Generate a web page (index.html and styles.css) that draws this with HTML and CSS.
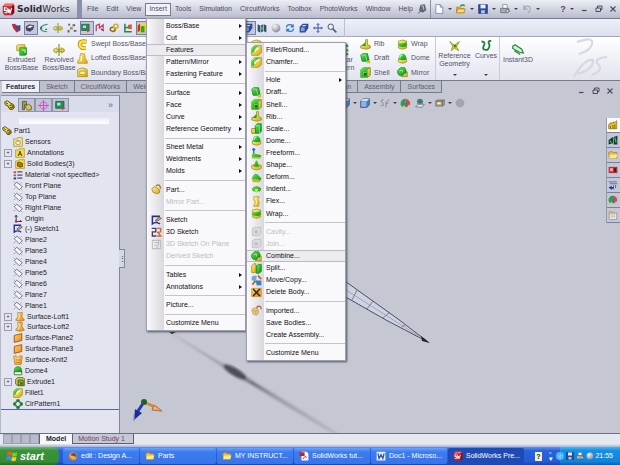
FILE: index.html
```
<!DOCTYPE html>
<html>
<head>
	<meta charset="utf-8">
	<title>SolidWorks</title>
	<link rel="stylesheet" href="styles.css">
</head>
<body>
<!-- icon sprite -->
<svg class="sprite" width="0" height="0">
	<defs>
		<linearGradient id="gy" x1="0" y1="0" x2="1" y2="1"><stop offset="0" stop-color="#fff68a"/><stop offset="1" stop-color="#d9a800"/></linearGradient>
		<linearGradient id="gg" x1="0" y1="0" x2="1" y2="1"><stop offset="0" stop-color="#5cf04a"/><stop offset="1" stop-color="#0c8a1c"/></linearGradient>
		<linearGradient id="go" x1="0" y1="0" x2="1" y2="1"><stop offset="0" stop-color="#ffd070"/><stop offset="1" stop-color="#e88a10"/></linearGradient>
		<radialGradient id="gb" cx=".35" cy=".3" r=".8"><stop offset="0" stop-color="#f4f4f8"/><stop offset="1" stop-color="#7e8090"/></radialGradient>
	</defs>
	<symbol id="sw" viewBox="0 0 16 16"><path d="M1 4L4 1H14L15 3V12L12 15H3L1 12Z" fill="#c8202c"/><path d="M1 4L4 1H14L12 4Z" fill="#ec7070"/><path d="M12 4L15 3V12L12 15Z" fill="#7c0c14"/><path d="M6 6H3V9H6V12H3M7 6L8 12L9 8L10 12L12 6" fill="none" stroke="#fff" stroke-width="1.4"/></symbol>
	<symbol id="fillet" viewBox="0 0 16 16"><path d="M1 5L5 1H15V11L11 15H1Z" fill="url(#gy)" stroke="#8a8a20"/><path d="M1 8Q2 2 8 1H12Q6 3 5 9L1 12Z" fill="url(#gg)"/><path d="M6 10Q6 6 11 5" fill="none" stroke="#fff" stroke-width="2"/></symbol>
	<symbol id="chamfer" viewBox="0 0 16 16"><path d="M1 5L5 1H15V11L11 15H1Z" fill="url(#gy)" stroke="#8a8a20"/><path d="M1 7L7 1H12L5 8V12L1 13Z" fill="url(#gg)"/><path d="M6 10V7L9 5H12" fill="none" stroke="#fff" stroke-width="2"/></symbol>
	<symbol id="draft" viewBox="0 0 16 16"><path d="M1 3L4 1H11L13 10L10 12H3Z" fill="url(#gg)" stroke="#0a7a1a"/><path d="M1 3H8L10 12" fill="none" stroke="#9cff8c"/><path d="M9 15L14 9L15 15Z" fill="#e4b810"/></symbol>
	<symbol id="shell" viewBox="0 0 16 16"><path d="M1 4L5 1H15V12L11 15H1Z" fill="url(#gy)" stroke="#6a7a10"/><path d="M1 4L5 1H15L11 4V15H1Z" fill="url(#gg)"/><path d="M4 7H9V12H4Z" fill="#0a6a14"/><path d="M5 12V8H9" fill="none" stroke="#b0f090"/></symbol>
	<symbol id="rib" viewBox="0 0 16 16"><path d="M1 10L8 7V1H11V8L15 10V13L9 15L1 13Z" fill="url(#gy)" stroke="#90801c"/><path d="M2 10L8 4V10Z" fill="url(#gg)"/></symbol>
	<symbol id="scale" viewBox="0 0 16 16"><path d="M1 8H7V15H1Z" fill="url(#gy)" stroke="#807010"/><path d="M6 4L9 1H15V12L12 15H7Z" fill="url(#gg)" stroke="#0a7a1a"/><path d="M6 4H12V15" fill="none" stroke="#9cff8c"/></symbol>
	<symbol id="dome" viewBox="0 0 16 16"><path d="M2 9V13Q8 17 14 13V9Z" fill="url(#gy)" stroke="#96901c"/><path d="M2 9Q3 1 8 1T14 9Q8 12 2 9Z" fill="url(#gg)"/><path d="M4 7Q5 3 8 3" fill="none" stroke="#caffb8" stroke-width="1.5"/></symbol>
	<symbol id="freeform" viewBox="0 0 16 16"><path d="M1 9Q3 7 6 8T10 9T15 11L13 15H2Z" fill="url(#gg)"/><path d="M1 13H14V15H1Z" fill="#cdb820"/><path d="M4 1V8M2 3L4 1L6 3" fill="none" stroke="#2f63b8" stroke-width="2"/></symbol>
	<symbol id="shape" viewBox="0 0 16 16"><path d="M1 8Q4 8 6 5Q7 2 8 1Q9 2 10 5Q12 8 15 8V12Q8 17 1 12Z" fill="url(#gy)" stroke="#8c9018"/><path d="M2 8Q5 8 6 5T8 1T10 5T14 8Q8 12 2 8Z" fill="url(#gg)"/></symbol>
	<symbol id="deform" viewBox="0 0 16 16"><path d="M1 10Q2 5 6 2Q10 2 12 6L15 9L13 14Q6 15 1 10Z" fill="url(#gg)"/><path d="M1 11L7 10L14 12L12 15H3Z" fill="#ccb62a"/></symbol>
	<symbol id="indent" viewBox="0 0 16 16"><path d="M1 7Q4 3 8 3T15 7L13 11L10 10Q8 14 6 10L3 11Z" fill="url(#gg)"/><path d="M5 8Q8 6 11 8L8 12Z" fill="#f2e04a"/></symbol>
	<symbol id="flex" viewBox="0 0 16 16"><path d="M4 1H12L10 5L12 9L11 15H4L6 9L4 5Z" fill="url(#gy)" stroke="#b39a1c"/><path d="M7 3L8 8L7 13" stroke="#fff" fill="none"/></symbol>
	<symbol id="wrap" viewBox="0 0 16 16"><path d="M2 3Q8 0 14 3V13Q8 17 2 13Z" fill="url(#gy)" stroke="#a09010"/><path d="M2 5Q8 8 14 4V10Q8 13 2 10Z" fill="url(#gg)"/></symbol>
	<symbol id="gray" viewBox="0 0 16 16"><path d="M2 4L5 2H14V11L11 14H2Z" fill="#dcdce0" stroke="#b4b4ba"/><path d="M5 6H10V11H5Z" fill="#c0c0c6"/></symbol>
	<symbol id="combine" viewBox="0 0 16 16"><path d="M8 7H15V14H6V9Z" fill="url(#gy)" stroke="#8c8418"/><path d="M1 5L5 1H11L13 4V9H9V12H3L1 9Z" fill="url(#gg)" stroke="#0a7a1a"/><path d="M4 5H8V8" fill="none" stroke="#b0ff9c"/></symbol>
	<symbol id="split" viewBox="0 0 16 16"><path d="M1 4L4 1H7V14H1Z" fill="url(#gy)" stroke="#908418"/><path d="M8 4L11 2H15V12L12 15H8Z" fill="url(#gg)" stroke="#0a7a1a"/></symbol>
	<symbol id="move" viewBox="0 0 16 16"><path d="M1 3L3 1H8V6L6 8H1Z" fill="#6ca4e8"/><path d="M8 8H15V15H8Z" fill="#3e78d0"/><path d="M2 14L6 9M10 1L15 6" stroke="#e05030" stroke-width="2.5"/><path d="M4 9H8V12" fill="none" stroke="#28a030" stroke-width="2"/></symbol>
	<symbol id="delete" viewBox="0 0 16 16"><path d="M1 2H15V14H1Z" fill="url(#go)" stroke="#c09410"/><path d="M3 3L13 13M13 3L3 13" stroke="#2a2010" stroke-width="2"/></symbol>
	<symbol id="imported" viewBox="0 0 16 16"><path d="M1 7L5 4L10 6L11 11L8 15L3 13Z" fill="#f4c878" stroke="#b48a50"/><path d="M3 8L7 9L9 7M7 9L7 13" stroke="#b48a50" fill="none"/><path d="M8 4Q11 0 14 3L15 6" stroke="#b06a3c" stroke-width="2" fill="none"/></symbol>
	<symbol id="partin" viewBox="0 0 16 16"><path d="M1 7L5 4L9 6L13 9L12 13L8 14L3 12Z" fill="url(#gy)" stroke="#8c7420"/><path d="M7 3Q11 0 13 3L14 7" stroke="#b07a30" stroke-width="2" fill="none"/></symbol>
	<symbol id="part" viewBox="0 0 16 16"><path d="M1 3L5 1L9 4L14 7L15 11L12 14L8 13L6 9L2 7Z" fill="url(#gy)" stroke="#4c4210" stroke-width="1.4"/><path d="M8 8Q11 6 13 9T9 11M3 4L6 6" fill="none" stroke="#3c340c" stroke-width="1.4"/></symbol>
	<symbol id="sketch" viewBox="0 0 16 16"><path d="M13 2H2V13Q7 9 13 13" fill="none" stroke="#20309c" stroke-width="2.2"/><path d="M6 8L12 3L15 5L9 9Z" fill="#e8a060" stroke="#503c28"/></symbol>
	<symbol id="sketch3d" viewBox="0 0 16 16"><path d="M1 2H7V7H2V13H8" fill="none" stroke="#4c3c58" stroke-width="2"/><path d="M9 2H14V7L10 8L14 13H9" fill="none" stroke="#d0682c" stroke-width="2"/></symbol>
	<symbol id="graysketch" viewBox="0 0 16 16"><path d="M2 2H14V14H2ZM5 5H11M5 9H9V14M11 2V9" fill="none" stroke="#bcbcc2" stroke-width="1.5"/></symbol>
	<symbol id="sensor" viewBox="0 0 16 16"><path d="M1 3H6L7 1H15V15H1Z" fill="#f3e47c" stroke="#96843c"/><circle cx="8" cy="9" r="3.5" fill="#fff" stroke="#806a20"/><path d="M8 9V6" stroke="#806a20"/></symbol>
	<symbol id="annot" viewBox="0 0 16 16"><path d="M1 3H6L7 1H15V15H1Z" fill="#f5dc50" stroke="#a08820"/><path d="M5 13L8 5L11 13M6 10H10" fill="none" stroke="#4c3808" stroke-width="1.4"/></symbol>
	<symbol id="bodies" viewBox="0 0 16 16"><path d="M1 3H6L7 1H15V15H1Z" fill="#f5d840" stroke="#a08820"/><path d="M4 6L7 5L12 7V12L8 13L4 11Z" fill="#a87c08" stroke="#3c2c04"/></symbol>
	<symbol id="material" viewBox="0 0 16 16"><path d="M1 2H5V5H1ZM1 7H5V10H1Z" fill="#c84c50"/><path d="M1 12H5V15H1Z" fill="#30348c"/><path d="M7 3H15M7 8H15M7 13H15" stroke="#4a4c70" stroke-width="2"/></symbol>
	<symbol id="plane" viewBox="0 0 16 16"><path d="M6 2L15 9L10 14L2 6Z" fill="#f4f5fa" stroke="#5c6070" stroke-width="1.3"/><path d="M1 1L4 4M12 12L15 15M1 13L4 11M12 4L14 2" stroke="#7c8090"/></symbol>
	<symbol id="origin" viewBox="0 0 16 16"><path d="M5 2V12H14M5 2L3 5M5 2L7 5M14 12L11 10" fill="none" stroke="#2c3058" stroke-width="1.5"/><circle cx="5" cy="12" r="2" fill="#b03040"/></symbol>
	<symbol id="loft" viewBox="0 0 16 16"><path d="M4 1H12L11 7L15 13L8 15L1 13L5 7Z" fill="url(#go)" stroke="#a8701c"/><path d="M6 2L7 8L5 12" fill="none" stroke="#fff0c0" stroke-width="1.5"/></symbol>
	<symbol id="surfplane" viewBox="0 0 16 16"><path d="M2 4L14 1V12L2 15Z" fill="url(#go)" stroke="#9c5810" stroke-width="1.5"/></symbol>
	<symbol id="knit" viewBox="0 0 16 16"><path d="M1 2L5 1L8 4L11 1L15 2L13 15H3Z" fill="url(#go)" stroke="#b07818"/><path d="M8 4V14" stroke="#fff0b0" stroke-width="2"/><path d="M6 8H10M6 12H10" stroke="#6c4008"/></symbol>
	<symbol id="domet" viewBox="0 0 16 16"><path d="M2 9V14H14V9Z" fill="#f4f8e8" stroke="#287a28" stroke-width="1.4"/><path d="M2 9Q2 1 8 1T14 9Z" fill="url(#gg)" stroke="#28701c"/></symbol>
	<symbol id="extrude" viewBox="0 0 16 16"><path d="M1 4L4 1H13L15 3V14H4L1 11Z" fill="#d8c850" stroke="#4c5010" stroke-width="1.2"/><path d="M5 5H13V13H5Z" fill="#90b838" stroke="#2c5c14" stroke-width="1.4"/><path d="M7 7L11 11M11 8V11H8" stroke="#1c3c0c" fill="none"/></symbol>
	<symbol id="pattern" viewBox="0 0 16 16"><path d="M6 1H10V4H6ZM6 12H10V15H6ZM1 6H4V10H1ZM12 6H15V10H12Z" fill="#1c6c28" stroke="#1c6c28"/><path d="M4 4L6 6M10 6L12 4M4 12L6 10M10 10L12 12" stroke="#2c8c38" stroke-width="3"/></symbol>
	<symbol id="linear" viewBox="0 0 16 16"><path d="M1 1H4V4H1ZM7 1H10V4H7ZM12 1H15V4H12ZM1 7H4V10H1ZM7 7H10V10H7ZM12 7H15V10H12ZM1 12H4V15H1ZM7 12H10V15H7ZM12 12H15V15H12Z" fill="#2a9a30"/></symbol>
	<symbol id="extrudeb" viewBox="0 0 16 16"><path d="M1 2L3 1H12V9H1Z" fill="url(#gy)" stroke="#a09020"/><path d="M5 5H14V14L12 15H5Z" fill="url(#gg)" stroke="#2c8c28"/><path d="M8 8H12V12" stroke="#e4f070" stroke-width="1.5" fill="none"/></symbol>
	<symbol id="revolve" viewBox="0 0 16 16"><path d="M1 7L5 5V7H11V5L15 7V10L11 12V10H5V12L1 10Z" fill="url(#gy)" stroke="#98882c"/><path d="M8 0V16" stroke="#5c9c30" stroke-width="1.5"/></symbol>
	<symbol id="sweep" viewBox="0 0 16 16"><path d="M14 4Q4 2 4 8T13 13" fill="none" stroke="#b08a08" stroke-width="6"/><path d="M14 4Q4 2 4 8T13 13" fill="none" stroke="#fae040" stroke-width="4"/></symbol>
	<symbol id="loftb" viewBox="0 0 16 16"><path d="M5 1H11L12 8L15 12V15H1V12L4 8Z" fill="url(#gy)" stroke="#b09010"/><path d="M6 4V12" stroke="#fff" stroke-width="1.5"/></symbol>
	<symbol id="boundary" viewBox="0 0 16 16"><path d="M1 4Q8 -1 15 4V14H1Z" fill="url(#gy)" stroke="#a88408"/><path d="M4 6H12V11H4Z" fill="#fff4a0" stroke="#b88c10"/></symbol>
	<symbol id="refgeo" viewBox="0 0 16 16"><path d="M1 2L7 7L14 2L10 9L13 14L7 11L3 14L5 8Z" fill="#e8d820" stroke="#7c8c18"/><circle cx="8" cy="8" r="2" fill="#30902c"/></symbol>
	<symbol id="curves" viewBox="0 0 16 16"><path d="M2 2Q8 2 5 8T10 13Q14 9 12 5T15 1" fill="none" stroke="#208040" stroke-width="2.4"/></symbol>
	<symbol id="instant" viewBox="0 0 16 16"><path d="M1 3L4 1L13 7L15 12L10 11L1 6ZM3 9L11 14" fill="#d8f0d4" stroke="#2c8440" stroke-width="1.6"/></symbol>
	<symbol id="ball" viewBox="0 0 16 16"><circle cx="8" cy="8" r="7" fill="url(#gb)"/></symbol>
	<symbol id="grayball" viewBox="0 0 16 16"><circle cx="8" cy="8" r="7" fill="#a2a4b0"/></symbol>
	<symbol id="rgb" viewBox="0 0 16 16"><path d="M8 8V1A7 7 0 0 1 14 11Z" fill="#e44834"/><path d="M8 8L14 11A7 7 0 0 1 3 13Z" fill="#f0c828"/><path d="M8 8L3 13A7 7 0 0 1 8 1Z" fill="#28a050"/><circle cx="9" cy="10" r="3" fill="#3c74d8"/></symbol>
	<symbol id="scene" viewBox="0 0 16 16"><circle cx="8" cy="6" r="5" fill="#58a068"/><path d="M4 5L10 8M6 2L12 6" stroke="#3860a0" stroke-width="2"/><path d="M1 14L5 10H15L11 15Z" fill="#e4e4e8" stroke="#50545c"/></symbol>
	<symbol id="boxy" viewBox="0 0 16 16"><path d="M1 5L4 3H15V11L12 13H1Z" fill="#a8a284" stroke="#686858"/><path d="M1 5H12V13M12 5L15 3" stroke="#55553c" fill="none"/><path d="M4 7H9V10H4Z" fill="#f4f4f4"/></symbol>
	<symbol id="cube" viewBox="0 0 16 16"><path d="M1 5L5 1H15V11L11 15H1Z" fill="#4c7cc4" stroke="#28406c"/><path d="M1 5L5 1H15L11 5Z" fill="#cfe2fa"/><path d="M2 6H10V14H2Z" fill="#8cb4ec"/></symbol>
	<symbol id="glasses" viewBox="0 0 16 16"><path d="M6 3Q1 2 2 6Q7 8 5 12Q3 13 1 12M9 15L11 6Q12 3 15 3M8 8H14" fill="none" stroke="#8c8ea0" stroke-width="1.6"/></symbol>
	<symbol id="new" viewBox="0 0 16 16"><path d="M3 1H10L14 5V15H3Z" fill="#fff" stroke="#5c6488"/><path d="M10 1V5H14" fill="#d0d8f0" stroke="#5c6488"/></symbol>
	<symbol id="open" viewBox="0 0 16 16"><path d="M1 5H6L7 7H13V14H1Z" fill="#e8b020" stroke="#a87810"/><path d="M3 8H15L12 14H1Z" fill="#ffe070" stroke="#a87810"/><path d="M7 4Q10 0 14 3" stroke="#2c9438" stroke-width="2.4" fill="none"/></symbol>
	<symbol id="save" viewBox="0 0 16 16"><path d="M1 1H15V15H1Z" fill="#2c4ca0" stroke="#182c68"/><path d="M4 1H12V7H4Z" fill="#e8eefc"/><path d="M5 10H11V15H5Z" fill="#b4c4e8"/></symbol>
	<symbol id="print" viewBox="0 0 16 16"><path d="M4 1H11L12 7H5Z" fill="#fff" stroke="#6c6e80"/><path d="M1 7H14L15 12L12 14H1Z" fill="#a8aab8" stroke="#55586c"/><circle cx="12" cy="11" r="2.4" fill="#d8dae0" stroke="#55586c"/></symbol>
	<symbol id="undo" viewBox="0 0 16 16"><path d="M3 2V8H9M3 8Q6 2 11 4T10 14" fill="none" stroke="#a4a6b4" stroke-width="2"/></symbol>
	<symbol id="pin" viewBox="0 0 16 16"><path d="M6 2L12 1L14 10L9 13L4 10Z" fill="#686c80" stroke="#3c4054"/><path d="M7 3L10 3L11 9" stroke="#fff" fill="none"/><path d="M6 11L2 15" stroke="#3c4054" stroke-width="1.5"/></symbol>
	<symbol id="min" viewBox="0 0 16 16"><path d="M2 11H11" stroke="#484c60" stroke-width="2.5"/></symbol>
	<symbol id="restore" viewBox="0 0 16 16"><path d="M5 6V2H14V9H11M2 6H11V13H2Z" fill="none" stroke="#484c60" stroke-width="2"/></symbol>
	<symbol id="close" viewBox="0 0 16 16"><path d="M3 3L13 13M13 3L3 13" stroke="#484c60" stroke-width="2.2"/></symbol>
	<symbol id="t1" viewBox="0 0 16 16"><path d="M1 2L6 1L14 7L15 12L9 15L4 9Z" fill="#b83040"/><path d="M7 5L15 3V11L9 10Z" fill="#305090"/></symbol>
	<symbol id="t2" viewBox="0 0 16 16"><path d="M1 6L7 2L15 4L13 10L8 14L2 12Z" fill="#46485a"/><path d="M3 7L8 4L13 5L8 8Z" fill="#f4f4f8"/></symbol>
	<symbol id="t3" viewBox="0 0 16 16"><path d="M14 2Q5 3 3 8T13 14" stroke="#30a048" stroke-width="2" fill="none"/><path d="M2 6H5V10H2ZM10 9H13V11H10Z" fill="#2c66b0"/></symbol>
	<symbol id="t5" viewBox="0 0 16 16"><path d="M2 1H5V4H2ZM9 2H13V5H9ZM5 7H9V10H5ZM1 11H4V15H1ZM11 11H15V14H11Z" fill="#5a5c70"/><path d="M4 4L11 12M11 4L3 12" stroke="#d0a030"/></symbol>
	<symbol id="t6" viewBox="0 0 16 16"><path d="M1 2H13V12H1Z" fill="#209058" stroke="#184c3c"/><path d="M3 4H8V8H3Z" fill="#a0ecc0"/><path d="M9 9L15 12L10 15Z" fill="#d04040"/></symbol>
	<symbol id="t7" viewBox="0 0 16 16"><path d="M2 13V4L7 2V8L13 3V12" stroke="#c04058" stroke-width="2" fill="none"/><path d="M9 9L14 13" stroke="#6c2c70" stroke-width="2"/></symbol>
	<symbol id="t8" viewBox="0 0 16 16"><ellipse cx="6" cy="10" rx="4" ry="3.4" fill="none" stroke="#8c7010" stroke-width="2.4"/><ellipse cx="11" cy="5" rx="3.6" ry="3" fill="none" stroke="#d8b020" stroke-width="2.4"/></symbol>
	<symbol id="t9" viewBox="0 0 16 16"><path d="M3 1V14H14M3 7H8" stroke="#2c8440" stroke-width="2.4" fill="none"/><path d="M8 3L14 2V10L8 9Z" fill="#c85c30"/></symbol>
	<symbol id="t10" viewBox="0 0 16 16"><path d="M1 4L5 1H15V12L11 15H1Z" fill="#f0e020"/><path d="M1 4L5 1V12L1 15Z" fill="#d83020"/><path d="M6 5H12V15H6Z" fill="#28a838"/></symbol>
	<symbol id="map" viewBox="0 0 16 16"><path d="M1 2L5 4V15L1 13ZM6 4L10 2V13L6 15ZM11 2L15 4V15L11 13Z" fill="#34506c"/><path d="M7 6L9 5V11L7 12Z" fill="#70c078"/></symbol>
	<symbol id="refresh" viewBox="0 0 16 16"><path d="M2 7Q4 1 10 3L13 6M13 2V6H9M14 9Q12 15 6 13L3 10M3 14V10H7" stroke="#2c7cc0" stroke-width="2" fill="none"/></symbol>
	<symbol id="darkcube" viewBox="0 0 16 16"><path d="M1 6L6 1H15V8L10 15H1Z" fill="#2c4c98"/><path d="M3 7H9V13H3Z" fill="#7ca4e0"/><path d="M4 5L7 3H12L10 5Z" fill="#d0e0fa"/></symbol>
	<symbol id="pan" viewBox="0 0 16 16"><path d="M8 1V15M1 8H15M6 3L8 1L10 3M6 13L8 15L10 13M3 6L1 8L3 10M13 6L15 8L13 10" stroke="#3058a8" stroke-width="1.6" fill="none"/></symbol>
	<symbol id="zoomi" viewBox="0 0 16 16"><circle cx="6" cy="6" r="4.4" fill="#e8f0fc" stroke="#505870" stroke-width="1.6"/><path d="M9 9L15 15" stroke="#505870" stroke-width="2.4"/></symbol>
	<symbol id="config" viewBox="0 0 16 16"><path d="M2 2H8V7H5V14H2Z" fill="#a09a50" stroke="#484420"/><path d="M7 8L11 6L15 9V14L10 15L7 12Z" fill="#d8c850" stroke="#484420"/></symbol>
	<symbol id="target" viewBox="0 0 16 16"><circle cx="8" cy="8" r="5" fill="#e8b0e4" stroke="#c478cc" stroke-width="1.6"/><path d="M8 0V16M0 8H16" stroke="#b060b8" stroke-width="1.6"/></symbol>
	<symbol id="house" viewBox="0 0 16 16"><path d="M1 7L5 4V6L9 3V5L14 1V14H1Z" fill="#e8c030" stroke="#806408"/><path d="M4 9V14M8 8V14M11 7V14" stroke="#806408" stroke-width="1.4"/></symbol>
	<symbol id="lib" viewBox="0 0 16 16"><path d="M1 8L8 3V13L1 15ZM9 3L15 1V15H9Z" fill="#183c2c"/><path d="M3 9L6 13M11 4L13 12" stroke="#50b068" stroke-width="2"/></symbol>
	<symbol id="folder" viewBox="0 0 16 16"><path d="M1 4L6 2L8 4H14V13H2Z" fill="#e8b838" stroke="#a07c18"/><path d="M3 7H15L13 13H2Z" fill="#ffe890"/></symbol>
	<symbol id="photo" viewBox="0 0 16 16"><path d="M1 3H15V13H1Z" fill="#b83038"/><path d="M3 5H8V10H3Z" fill="#f0a0a0"/><path d="M10 5H13V11H10Z" fill="#401820"/></symbol>
	<symbol id="layers" viewBox="0 0 16 16"><path d="M1 3H14M3 6H15M9 8V15M12 8V13" stroke="#60788c" stroke-width="1.6"/><path d="M1 12L6 9V11H9V14H6V16Z" fill="#2038a0"/></symbol>
	<symbol id="prop" viewBox="0 0 16 16"><path d="M2 5H14V15H2Z" fill="#f4f4f0" stroke="#807c70"/><path d="M1 2H9L12 5H1Z" fill="#d8a850"/><path d="M4 8H12M4 11H12" stroke="#908c80"/></symbol>
	<symbol id="firefox" viewBox="0 0 16 16"><circle cx="8" cy="8" r="7" fill="#e87820"/><circle cx="9" cy="7" r="4" fill="#3858a8"/><path d="M2 5Q6 8 9 8T13 13Q4 15 2 5Z" fill="#f8b030"/></symbol>
	<symbol id="pdf" viewBox="0 0 16 16"><path d="M4 1H12L15 4V15H4Z" fill="#fff"/><path d="M1 2H9V8H1Z" fill="#c82028"/><path d="M7 13Q10 5 12 11" fill="none" stroke="#c82028" stroke-width="1.5"/></symbol>
	<symbol id="word" viewBox="0 0 16 16"><path d="M1 1H15V15H1Z" fill="#e8f0fc"/><path d="M3 4L5 12L8 6L11 12L13 4" fill="none" stroke="#2850a8" stroke-width="2"/></symbol>
	<symbol id="flag" viewBox="0 0 16 16"><path d="M2 3Q5 1 8 3L7 8Q4 6 1 8Z" fill="#f05a28"/><path d="M9 3Q12 5 15 3L14 8Q11 10 8 8Z" fill="#80cc28"/><path d="M1 9Q4 7 7 9L6 14Q3 12 0 14Z" fill="#3c8cf0"/><path d="M8 9Q11 11 14 9L13 14Q10 16 7 14Z" fill="#fcd020"/></symbol>
	<symbol id="ds" viewBox="0 0 40 42"><path d="M5 5Q22 -1 20 7Q18 14 7 17M2 40Q12 22 21 23Q22 32 6 37M35 20Q23 21 25 26Q33 33 20 38" fill="none" stroke="#d6d8e2" stroke-width="2.2"/></symbol>
</svg>

<div class="app">
	<div class="title">
		<h1 class="logo"><svg class="i13"><use href="#sw"/></svg><b>Solid</b>Works</h1>
		<div class="nav">
			<button>File</button>
			<button>Edit</button>
			<button>View</button>
			<button class="current">Insert</button>
			<button>Tools</button>
			<button>Simulation</button>
			<button>CircuitWorks</button>
			<button>Toolbox</button>
			<button>PhotoWorks</button>
			<button>Window</button>
			<button>Help</button>
		</div>
		<div class="quick">
			<button class="pin" aria-label="Pin"><svg class="i10"><use href="#pin"/></svg></button>
			<button class="drop" aria-label="New"><svg class="i10"><use href="#new"/></svg></button>
			<button class="drop" aria-label="Open"><svg class="i10"><use href="#open"/></svg></button>
			<button class="drop" aria-label="Save"><svg class="i10"><use href="#save"/></svg></button>
			<button class="drop" aria-label="Print"><svg class="i10"><use href="#print"/></svg></button>
			<button class="drop" aria-label="Undo"><svg class="i10"><use href="#undo"/></svg></button>
		</div>
		<div class="wins">
			<button class="drop help">?</button>
			<button aria-label="Minimize"><svg class="i8"><use href="#min"/></svg></button>
			<button aria-label="Restore"><svg class="i8"><use href="#restore"/></svg></button>
			<button aria-label="Close"><svg class="i8"><use href="#close"/></svg></button>
		</div>
	</div>

	<div class="tools">
		<button aria-label="Extrude"><svg class="i10"><use href="#t1"/></svg></button>
		<button class="on" aria-label="Shaded"><svg class="i10"><use href="#t2"/></svg></button>
		<button aria-label="Curve"><svg class="i10"><use href="#t3"/></svg></button>
		<button aria-label="Revolve"><svg class="i10"><use href="#revolve"/></svg></button>
		<button aria-label="Relations"><svg class="i10"><use href="#t5"/></svg></button>
		<button class="on" aria-label="Display"><svg class="i10"><use href="#t6"/></svg></button>
		<button aria-label="Measure"><svg class="i10"><use href="#t7"/></svg></button>
		<button aria-label="Mate"><svg class="i10"><use href="#t8"/></svg></button>
		<button aria-label="Tree"><svg class="i10"><use href="#t9"/></svg></button>
		<button class="on" aria-label="Colors"><svg class="i10"><use href="#t10"/></svg></button>
		<div class="tools-more">
			<button class="on" aria-label="Section"><svg class="i10"><use href="#darkcube"/></svg></button>
			<button aria-label="Views"><svg class="i10"><use href="#map"/></svg></button>
			<button aria-label="Appearance"><svg class="i10"><use href="#ball"/></svg></button>
			<button aria-label="Rotate"><svg class="i10"><use href="#refresh"/></svg></button>
			<button aria-label="Orientation"><svg class="i10"><use href="#darkcube"/></svg></button>
			<button aria-label="Pan"><svg class="i10"><use href="#pan"/></svg></button>
			<button aria-label="Zoom"><svg class="i10"><use href="#zoomi"/></svg></button>
		</div>
	</div>

	<div class="ribbon">
		<button class="big"><svg class="i12"><use href="#extrudeb"/></svg>Extruded Boss/Base</button>
		<button class="big"><svg class="i12"><use href="#revolve"/></svg>Revolved Boss/Base</button>
		<div class="stack">
			<button><svg class="i11"><use href="#sweep"/></svg>Swept Boss/Base</button>
			<button><svg class="i11"><use href="#loftb"/></svg>Lofted Boss/Base</button>
			<button><svg class="i11"><use href="#boundary"/></svg>Boundary Boss/Base</button>
		</div>
		<button class="peek" aria-label="Fillet"><svg class="i11"><use href="#boundary"/></svg></button>
		<button class="big"><svg class="i12"><use href="#linear"/></svg>Linear Pattern</button>
		<div class="stack">
			<button><svg class="i11"><use href="#rib"/></svg>Rib</button>
			<button><svg class="i11"><use href="#draft"/></svg>Draft</button>
			<button><svg class="i11"><use href="#shell"/></svg>Shell</button>
		</div>
		<div class="stack line">
			<button><svg class="i11"><use href="#wrap"/></svg>Wrap</button>
			<button><svg class="i11"><use href="#dome"/></svg>Dome</button>
			<button><svg class="i11"><use href="#combine"/></svg>Mirror</button>
		</div>
		<button class="big top"><svg class="i12"><use href="#refgeo"/></svg>Reference Geometry<i></i></button>
		<button class="big top line"><svg class="i12"><use href="#curves"/></svg>Curves<i></i></button>
		<button class="big"><svg class="i12"><use href="#instant"/></svg>Instant3D</button>
		<svg class="ds"><use href="#ds"/></svg>
	</div>

	<div class="tabs">
		<button class="current">Features</button>
		<button>Sketch</button>
		<button>CircuitWorks</button>
		<div class="tabs-mid">
			<button>Weldments</button>
			<button>Simulation</button>
		</div>
		<button>Assembly</button>
		<button>Surfaces</button>
	</div>

	<div class="main">
		<div class="side">
			<div class="side-hd">
				<button class="current" aria-label="Feature tree"><svg class="i11"><use href="#part"/></svg></button>
				<button aria-label="Properties"><svg class="i11"><use href="#config"/></svg></button>
				<button aria-label="Configurations"><svg class="i11"><use href="#target"/></svg></button>
				<button aria-label="Display"><svg class="i11"><use href="#t6"/></svg></button>
				<button class="more">»</button>
			</div>
			<input class="filter" type="text" aria-label="Filter">
			<ul class="tree">
				<li class="root"><svg class="i10"><use href="#part"/></svg>Part1</li>
				<li><svg class="i10"><use href="#sensor"/></svg>Sensors</li>
				<li class="plus"><svg class="i10"><use href="#annot"/></svg>Annotations</li>
				<li class="plus"><svg class="i10"><use href="#bodies"/></svg>Solid Bodies(3)</li>
				<li><svg class="i10"><use href="#material"/></svg>Material &lt;not specified&gt;</li>
				<li><svg class="i10"><use href="#plane"/></svg>Front Plane</li>
				<li><svg class="i10"><use href="#plane"/></svg>Top Plane</li>
				<li><svg class="i10"><use href="#plane"/></svg>Right Plane</li>
				<li><svg class="i10"><use href="#origin"/></svg>Origin</li>
				<li><svg class="i10"><use href="#sketch"/></svg>(-) Sketch1</li>
				<li><svg class="i10"><use href="#plane"/></svg>Plane2</li>
				<li><svg class="i10"><use href="#plane"/></svg>Plane3</li>
				<li><svg class="i10"><use href="#plane"/></svg>Plane4</li>
				<li><svg class="i10"><use href="#plane"/></svg>Plane5</li>
				<li><svg class="i10"><use href="#plane"/></svg>Plane6</li>
				<li><svg class="i10"><use href="#plane"/></svg>Plane7</li>
				<li><svg class="i10"><use href="#plane"/></svg>Plane1</li>
				<li class="plus"><svg class="i10"><use href="#loft"/></svg>Surface-Loft1</li>
				<li class="plus"><svg class="i10"><use href="#loft"/></svg>Surface-Loft2</li>
				<li><svg class="i10"><use href="#surfplane"/></svg>Surface-Plane2</li>
				<li><svg class="i10"><use href="#surfplane"/></svg>Surface-Plane3</li>
				<li><svg class="i10"><use href="#knit"/></svg>Surface-Knit2</li>
				<li><svg class="i10"><use href="#domet"/></svg>Dome4</li>
				<li class="plus"><svg class="i10"><use href="#extrude"/></svg>Extrude1</li>
				<li><svg class="i10"><use href="#fillet"/></svg>Fillet1</li>
				<li><svg class="i10"><use href="#pattern"/></svg>CirPattern1</li>
			</ul>
			<span class="grip">⋮</span>
		</div>
		<div class="view">
			<!-- model, its shadow and the axis triad -->
			<svg class="model" width="496" height="339" viewBox="119 95 496 339">
				<defs>
					<radialGradient id="sh"><stop offset="0" stop-color="#30323a"/><stop offset=".12" stop-color="#50525c" stop-opacity=".8"/><stop offset=".3" stop-color="#6c6e78" stop-opacity=".5"/><stop offset="1" stop-color="#7c7e88" stop-opacity=".2"/></radialGradient>
					<filter id="soft"><feGaussianBlur stdDeviation="1"/></filter>
				</defs>
				<g transform="rotate(31 234 372)" filter="url(#soft)">
					<path d="M155 371H215Q234 367 256 370L355 371V375L256 375Q234 378 215 374L155 372Z" fill="url(#sh)"/>
					<ellipse cx="234" cy="372" rx="13" ry="4" fill="#2c2e36" opacity=".7"/>
				</g>
				<path d="M168 332H175L171 334Z" fill="#20222c"/>
				<path d="M320 264L397 319L427 342L385 320L320 283Z" fill="#cfd1e4" stroke="#4c4e60"/>
				<path d="M345 290L427 342" stroke="#a4a6b8" fill="none"/>
				<path d="M356 290L351 300M372 301L366 309M388 313L382 318M404 325L399 328" stroke="#7c7e90" fill="none"/>
				<path d="M420 336L429 343L421 341Z" fill="#20222c"/>
				<path d="M143 402L156 408" stroke="#d88838" stroke-width="3"/><path d="M153 405L161 411L151 410Z" fill="#f0b070" stroke="#b06c2c"/>
				<path d="M143 402L137 411" stroke="#2438b8" stroke-width="3"/><path d="M134 409L141 413L133 420Z" fill="#1c2c98"/><path d="M133 414V421" stroke="#8088c8"/>
				<circle cx="143" cy="402" r="3" fill="#1c6424"/>
			</svg>
			<div class="heads">
				<button class="drop" aria-label="Section view"><svg class="i10"><use href="#cube"/></svg></button>
				<button class="drop" aria-label="Display style"><svg class="i10"><use href="#cube"/></svg></button>
				<button class="drop" aria-label="Hide items"><svg class="i10"><use href="#glasses"/></svg></button>
				<button aria-label="Edit appearance"><svg class="i11"><use href="#rgb"/></svg></button>
				<button class="drop" aria-label="Scene"><svg class="i10"><use href="#scene"/></svg></button>
				<button class="drop" aria-label="View settings"><svg class="i10"><use href="#boxy"/></svg></button>
				<button aria-label="Render"><svg class="i10"><use href="#grayball"/></svg></button>
			</div>
			<div class="wins docs">
				<button aria-label="Minimize document"><svg class="i8"><use href="#min"/></svg></button>
				<button aria-label="Restore document"><svg class="i8"><use href="#restore"/></svg></button>
				<button aria-label="Close document"><svg class="i8"><use href="#close"/></svg></button>
			</div>
			<div class="pane">
				<button class="current" aria-label="Resources"><svg class="i10"><use href="#house"/></svg></button>
				<button aria-label="Design library"><svg class="i10"><use href="#lib"/></svg></button>
				<button aria-label="File explorer"><svg class="i10"><use href="#folder"/></svg></button>
				<button aria-label="Photo"><svg class="i10"><use href="#photo"/></svg></button>
				<button aria-label="View palette"><svg class="i10"><use href="#layers"/></svg></button>
				<button aria-label="Appearances"><svg class="i10"><use href="#rgb"/></svg></button>
				<button aria-label="Custom properties"><svg class="i10"><use href="#prop"/></svg></button>
			</div>
		</div>
	</div>

	<div class="sheets">
		<div class="steps"><button aria-label="First"></button><button aria-label="Previous"></button><button aria-label="Next"></button><button aria-label="Last"></button></div>
		<button class="current">Model</button>
		<button class="motion">Motion Study 1</button>
	</div>

	<div class="taskbar">
		<button class="start"><svg class="i12"><use href="#flag"/></svg>start</button>
		<button class="task"><svg class="i10"><use href="#firefox"/></svg>edit : Design A...</button>
		<button class="task"><svg class="i10"><use href="#folder"/></svg>Parts</button>
		<button class="task"><svg class="i10"><use href="#folder"/></svg>MY INSTRUCT...</button>
		<button class="task"><svg class="i10"><use href="#pdf"/></svg>SolidWorks tut...</button>
		<button class="task"><svg class="i10"><use href="#word"/></svg>Doc1 - Microso...</button>
		<button class="task current"><svg class="i10"><use href="#sw"/></svg>SolidWorks Pre...</button>
		<div class="lang"><b>?</b><span>▫<br>▾</span></div>
		<div class="tray"><button aria-label="Show hidden icons">‹</button><svg class="i8"><use href="#save"/></svg><svg class="i8"><use href="#print"/></svg><svg class="i8"><use href="#ball"/></svg><span>21:55</span></div>
	</div>

	<ul class="menu insert">
		<li><button class="sub">Boss/Base</button></li>
		<li><button class="sub">Cut</button></li>
		<li class="current"><button>Features</button></li>
		<li><button class="sub">Pattern/Mirror</button></li>
		<li><button class="sub">Fastening Feature</button></li>
		<li class="sep"></li>
		<li><button class="sub">Surface</button></li>
		<li><button class="sub">Face</button></li>
		<li><button class="sub">Curve</button></li>
		<li><button class="sub">Reference Geometry</button></li>
		<li class="sep"></li>
		<li><button class="sub">Sheet Metal</button></li>
		<li><button class="sub">Weldments</button></li>
		<li><button class="sub">Molds</button></li>
		<li class="sep"></li>
		<li><svg class="i11"><use href="#partin"/></svg><button>Part...</button></li>
		<li><button disabled>Mirror Part...</button></li>
		<li class="sep"></li>
		<li><svg class="i11"><use href="#sketch"/></svg><button>Sketch</button></li>
		<li><svg class="i11"><use href="#sketch3d"/></svg><button>3D Sketch</button></li>
		<li><svg class="i11"><use href="#graysketch"/></svg><button disabled>3D Sketch On Plane</button></li>
		<li><button disabled>Derived Sketch</button></li>
		<li class="sep"></li>
		<li><button class="sub">Tables</button></li>
		<li><button class="sub">Annotations</button></li>
		<li class="sep"></li>
		<li><button>Picture...</button></li>
		<li class="sep"></li>
		<li><button>Customize Menu</button></li>
	</ul>

	<ul class="menu features">
		<li><svg class="i11"><use href="#fillet"/></svg><button>Fillet/Round...</button></li>
		<li><svg class="i11"><use href="#chamfer"/></svg><button>Chamfer...</button></li>
		<li class="sep"></li>
		<li><button class="sub">Hole</button></li>
		<li><svg class="i11"><use href="#draft"/></svg><button>Draft...</button></li>
		<li><svg class="i11"><use href="#shell"/></svg><button>Shell...</button></li>
		<li><svg class="i11"><use href="#rib"/></svg><button>Rib...</button></li>
		<li><svg class="i11"><use href="#scale"/></svg><button>Scale...</button></li>
		<li><svg class="i11"><use href="#dome"/></svg><button>Dome...</button></li>
		<li><svg class="i11"><use href="#freeform"/></svg><button>Freeform...</button></li>
		<li><svg class="i11"><use href="#shape"/></svg><button>Shape...</button></li>
		<li><svg class="i11"><use href="#deform"/></svg><button>Deform...</button></li>
		<li><svg class="i11"><use href="#indent"/></svg><button>Indent...</button></li>
		<li><svg class="i11"><use href="#flex"/></svg><button>Flex...</button></li>
		<li><svg class="i11"><use href="#wrap"/></svg><button>Wrap...</button></li>
		<li class="sep"></li>
		<li><svg class="i11"><use href="#gray"/></svg><button disabled>Cavity...</button></li>
		<li><svg class="i11"><use href="#gray"/></svg><button disabled>Join...</button></li>
		<li class="current"><svg class="i11"><use href="#combine"/></svg><button>Combine...</button></li>
		<li><svg class="i11"><use href="#split"/></svg><button>Split...</button></li>
		<li><svg class="i11"><use href="#move"/></svg><button>Move/Copy...</button></li>
		<li><svg class="i11"><use href="#delete"/></svg><button>Delete Body...</button></li>
		<li class="sep"></li>
		<li><svg class="i11"><use href="#imported"/></svg><button>Imported...</button></li>
		<li><button>Save Bodies...</button></li>
		<li><button>Create Assembly...</button></li>
		<li class="sep"></li>
		<li><button>Customize Menu</button></li>
	</ul>
</div>
</body>
</html>
```
FILE: styles.css
```
* {
	margin: 0;
	padding: 0;
	box-sizing: border-box;
}
body {
	font: 7px/10px "Liberation Sans", Arial, sans-serif;
	color: #1c1c24;
	background: #c5c7d3;
	overflow: hidden;
}
ul {
	list-style: none;
}
button {
	font: inherit;
	color: inherit;
	background: none;
	border: none;
	white-space: nowrap;
}
svg {
	flex: none;
	display: block;
}
.sprite {
	position: absolute;
}
.i8 { width: 8px; height: 8px; }
.i10 { width: 10px; height: 10px; }
.i11 { width: 11px; height: 11px; }
.i12 { width: 12px; height: 12px; }
.i13 { width: 13px; height: 13px; }

.app {
	position: relative;
	height: 100vh;
	display: flex;
	flex-direction: column;
}

/* title bar */
.title {
	flex: none;
	height: 19px;
	display: flex;
	align-items: center;
	background: linear-gradient(#eceef6, #b9bccb);
	border-bottom: 1px solid #767a92;
	color: #4c4e62;
}
.logo {
	flex: none;
	display: flex;
	align-items: center;
	width: 82px;
	height: 18px;
	padding-left: 2px;
	font: 9px/18px "DejaVu Sans", sans-serif;
	color: #2c2c34;
	border-right: 5px solid #8a8fac;
}
.logo svg {
	margin-right: 2px;
}
.nav {
	display: flex;
	flex: 1;
	padding-left: 1px;
}
.nav button {
	height: 13px;
	padding: 0 4px;
}
.nav .current {
	padding: 0 3px;
	border: 1px solid #767a92;
	background: #f0f1f6;
}
.quick,
.wins {
	flex: none;
	display: flex;
	align-items: center;
}
.drop {
	display: flex;
	align-items: center;
	width: 22px;
}
.drop:after {
	content: "";
	margin-left: 4px;
	border: 2px solid transparent;
	border-top-color: #3c3e50;
	border-bottom: none;
}
.pin {
	width: 14px;
	height: 18px;
	border-right: 1px solid #8a8fa4;
	margin-right: 3px;
}
.wins {
	padding-right: 1px;
	margin-left: 12px;
}
.wins button {
	width: 14px;
	display: flex;
	justify-content: center;
	align-items: center;
}
.wins .help {
	width: 22px;
	font-weight: bold;
	font-size: 9px;
}

/* icon toolbar */
.tools {
	flex: none;
	height: 18px;
	display: flex;
	align-items: center;
	padding-left: 10px;
	background: linear-gradient(#eef0f9, #dcdfee);
	border-bottom: 1px solid #a4a8bc;
}
.tools button {
	width: 14px;
	height: 14px;
	padding: 1px;
}
.tools .on {
	border: 1px solid #7c80a0;
	background: #c4c8dc;
	padding: 0;
}
.tools-more {
	display: flex;
	margin-left: 92px;
	height: 18px;
	padding: 2px 4px 0 0;
	border-right: 1px solid #bcc0d0;
}

/* ribbon */
.ribbon {
	flex: none;
	height: 44px;
	display: grid;
	grid-template-columns: 39px 36px 172px 77px 34px 37px 39px 37px 27px 36px 1fr;
	padding-left: 2px;
	background: linear-gradient(#fff, #e2e4ee);
	border-bottom: 1px solid #767a8c;
	color: #50526a;
}
.big {
	display: flex;
	flex-direction: column;
	align-items: center;
	padding-top: 7px;
	line-height: 8px;
	white-space: normal;
}
.big.top {
	padding-top: 3px;
}
.big i {
	margin-top: auto;
	margin-bottom: 4px;
	border: 2px solid transparent;
	border-top-color: #3c3e50;
	border-bottom: none;
}
.stack {
	display: flex;
	flex-direction: column;
	justify-content: space-around;
}
.stack button {
	display: flex;
	align-items: center;
	gap: 3px;
}
.line {
	border-right: 1px solid #c8cad8;
}
.peek {
	display: flex;
	padding: 2px 0 0 2px;
}
.ds {
	justify-self: end;
	width: 40px;
	height: 42px;
	margin-right: 8px;
}

/* command tabs */
.tabs {
	flex: none;
	display: flex;
	height: 14px;
	padding-left: 2px;
	color: #5c5e70;
}
.tabs button {
	height: 12px;
	padding: 0 6px;
	border: 1px solid #767a8c;
	border-width: 0 1px 1px 0;
	background: #bcbfcc;
}
.tabs .current {
	padding: 0 4px;
	background: #eef0f7;
	font-weight: bold;
	color: #2c2c38;
}
.tabs-mid {
	display: flex;
	justify-content: space-between;
	width: 231px;
}

/* work area */
.main {
	flex: 1;
	min-height: 0;
	display: flex;
	border-bottom: 1px solid #6c7082;
}
.side {
	position: relative;
	z-index: 1;
	flex: none;
	width: 120px;
	display: flex;
	flex-direction: column;
	background: #e2e5f0;
	border-right: 1px solid #82869a;
	border-left: 1px solid #b4b8c8;
}
.side-hd {
	flex: none;
	display: flex;
	height: 17px;
	padding-top: 2px;
	background: #d9dcea;
	border-top: 1px solid #9094a8;
}
.side-hd button {
	width: 17px;
	height: 14px;
	padding: 1px 2px;
	border: 1px solid #9094a8;
	background: #c0c4d4;
}
.side-hd .current {
	border-color: transparent;
	background: none;
}
.side-hd .more {
	margin-left: auto;
	border: none;
	background: none;
	font-size: 9px;
	color: #5c6080;
}
.filter {
	flex: none;
	height: 6px;
	margin: 6px 10px 2px 18px;
	border: none;
	background: linear-gradient(#eceef6, #fff);
}
.tree {
	flex: none;
	display: flex;
	flex-direction: column;
	height: 284px;
	border-bottom: 1px solid #5468a8;
}
.tree li {
	flex: 1 1 11px;
	min-height: 0;
	display: flex;
	align-items: center;
	gap: 2px;
	padding-left: 12px;
}
.tree .root {
	padding-left: 1px;
}
.tree .plus {
	padding-left: 3px;
}
.tree .plus:before {
	content: "+";
	width: 6px;
	height: 6px;
	margin-right: 1px;
	border: 1px solid #9a9eb0;
	font-size: 5px;
	line-height: 4px;
	text-align: center;
}
.grip {
	position: absolute;
	right: -6px;
	top: 154px;
	width: 6px;
	height: 19px;
	border: 1px solid #82869a;
	border-left: none;
	background: #d4d7e4;
	line-height: 17px;
	text-align: center;
}
.view {
	position: relative;
	flex: 1;
	display: flex;
	align-items: flex-start;
	background: #c5c7d3;
}
.model {
	position: absolute;
	left: 0;
	top: 0;
}
.heads {
	display: flex;
	align-items: center;
	height: 16px;
	padding-left: 220px;
}
.heads .drop {
	width: 20px;
}
.heads .drop:after {
	margin-left: 3px;
}
.heads button:not(.drop) {
	width: 15px;
}
.docs {
	position: absolute;
	right: 2px;
	top: -8px;
}
.pane {
	margin: 23px 0 0 auto;
	width: 14px;
	border-left: 1px solid #9498ac;
}
.pane button {
	display: block;
	width: 13px;
	height: 15px;
	padding: 1px;
	border-bottom: 1px solid #7c80a0;
	background: #c4c7d8;
}
.pane .current {
	background: #fafafc;
}

/* model / motion study tabs */
.sheets {
	flex: none;
	display: flex;
	height: 13px;
	padding: 0 0 3px 3px;
	background: linear-gradient(#e6e8f0 10px, #aab0c4);
}
.sheets button {
	padding: 0 5px;
}
.sheets .current {
	padding: 0 6px;
	border-right: 1px solid #5c6074;
	background: #f6f7fb;
	font-weight: bold;
}
.sheets .motion {
	padding: 0 8px 0 5px;
	border-right: 1px solid #5c6074;
	border-bottom: 1px solid #5c6074;
	background: #c6c8d4;
	color: #743c64;
}
.steps {
	display: flex;
	border-right: 1px solid #5c6074;
}
.sheets .steps button {
	width: 9px;
	padding: 0;
	border: 1px solid #9ca0b0;
	background: #b8bbc8;
}

/* taskbar */
.taskbar {
	flex: none;
	display: flex;
	align-items: center;
	height: 18px;
	background: linear-gradient(#5c94f4, #2a62dc 20%, #245cd8 80%, #1c44a8);
	color: #fff;
}
.start {
	display: flex;
	align-items: center;
	gap: 2px;
	width: 59px;
	height: 18px;
	padding-left: 6px;
	margin-right: 4px;
	border-radius: 0 6px 6px 0;
	background: linear-gradient(#6cb86c, #389438 20%, #388c38 80%, #246c24);
	font: italic bold 11px/18px "Liberation Sans", Arial, sans-serif;
}
.task {
	display: flex;
	flex: 0 1 76px;
	align-items: center;
	gap: 3px;
	height: 16px;
	margin-right: 1px;
	padding-left: 5px;
	overflow: hidden;
	border-radius: 2px;
	background: linear-gradient(#68a4fc, #3c7cf0 25%, #3874e8);
}
.task.current {
	background: #1e4cb4;
}
.lang {
	display: flex;
	align-items: center;
	gap: 7px;
	margin-left: auto;
	padding-right: 7px;
	line-height: 6px;
}
.lang b {
	width: 7px;
	height: 9px;
	line-height: 9px;
	text-align: center;
	color: #222;
	background: #f4f0d0;
}
.tray {
	display: flex;
	align-items: center;
	justify-content: space-between;
	width: 60px;
	height: 18px;
	padding-right: 7px;
	background: linear-gradient(#48b4f8, #1490e4 20%, #1084dc 80%, #0c60b0);
}
.tray button {
	width: 8px;
	height: 8px;
	margin-left: -4px;
	border-radius: 50%;
	line-height: 7px;
	background: #50b8fc;
}

/* drop-down menus */
.menu {
	position: absolute;
	z-index: 2;
	display: flex;
	flex-direction: column;
	width: 100px;
	padding: 1px 0;
	border: 1px solid #a0a0ac;
	background: linear-gradient(90deg, #fafafc, #d8d8de 17px, #f9f9fb 17px);
	box-shadow: 1px 1px 2px #50525f;
	color: #101014;
}
.menu li {
	flex: 1 1 12px;
	display: flex;
	align-items: center;
	padding-left: 4px;
}
.menu button {
	flex: 1;
	display: flex;
	align-items: center;
	justify-content: space-between;
	height: 10px;
	margin-left: 15px;
	padding-right: 3px;
	text-align: left;
}
.menu svg + button {
	margin-left: 4px;
}
.menu button:disabled {
	color: #bcbcc2;
}
.menu .sub:after {
	content: "";
	border: 2px solid transparent;
	border-left: 3px solid #101014;
	border-right: none;
}
.menu .sep {
	flex: 1 1 6px;
	padding: 0;
}
.menu .sep:after {
	content: "";
	flex: 1;
	height: 1px;
	margin-left: 18px;
	background: #c4c4cc;
}
.menu .current {
	background: #ececf0;
	box-shadow: inset 0 1px #bcbcc4, inset 0 -1px #bcbcc4;
}
.insert {
	left: 146px;
	top: 18px;
	height: 313px;
}
.features {
	left: 246px;
	top: 42px;
	height: 319px;
}
```
